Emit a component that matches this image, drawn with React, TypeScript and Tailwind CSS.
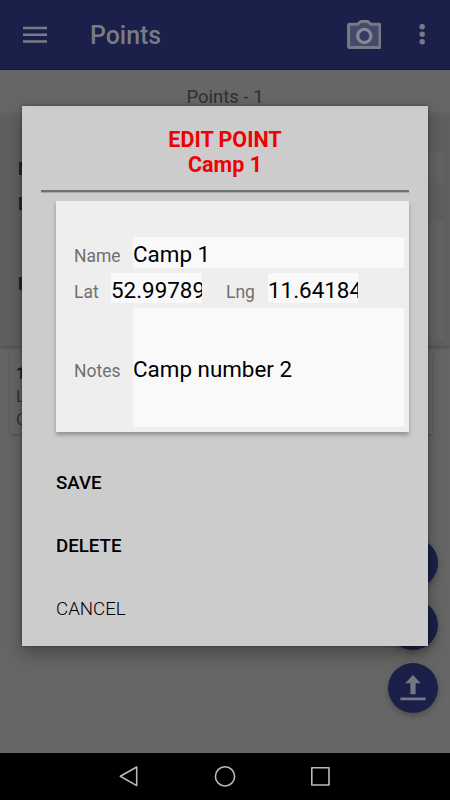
import React from "react";

function Header() {
  return (
    <header className="flex h-[70px] shrink-0 items-center border-b border-[#11183f] bg-[#1a2049] pl-[23px] pr-[25px] text-[#797b84]">
      <svg className="h-[18px] w-6" viewBox="0 0 24 18" fill="currentColor">
        <path d="M0 .7h24v2.6H0zM0 7.4h24V10H0zM0 14.2h24v2.6H0z" />
      </svg>
      <h1 className="ml-[43px] mt-[2px] text-[24.9px] font-medium leading-7">Points</h1>
      <svg className="ml-auto h-[30px] w-[34px]" viewBox="0 0 34 30">
        <path
          d="M2.3 4.6h8l3-2.8h7.4l3 2.8h8q1 0 1 1v21.2q0 1-1 1H2.3q-1 0-1-1V5.6q0-1 1-1z"
          fill="#454a6c"
          stroke="#797b84"
          strokeWidth="3"
          strokeLinejoin="round"
          transform="translate(.3 -.3)"
        />
        <circle cx="17.3" cy="16" r="6.6" fill="#343a62" stroke="#858794" strokeWidth="3.3" />
      </svg>
      <svg className="ml-[38px] h-[21px] w-[6px]" viewBox="0 0 6 21" fill="currentColor">
        <circle cx="3.2" cy="2.8" r="2.7" />
        <circle cx="3.2" cy="10.2" r="2.7" />
        <circle cx="3.2" cy="17.8" r="2.7" />
      </svg>
    </header>
  );
}

function PointsPage() {
  return (
    <main className="flex-1 bg-[#666666] text-[#303030]">
      <p className="h-[43px] pt-[15px] text-center text-[18.5px] leading-6">Points - 1</p>
      <section className="h-[233px] bg-[#606060] pl-[18px] pr-[6px] pt-[39px] text-[17.5px] font-bold leading-[31px] text-[#202020] shadow-[0_2px_3px_rgba(0,0,0,0.2)]">
        <div className="flex h-[31px] justify-between">
          <span className="mt-[2px]">Name</span>
          <span className="w-[270px] bg-[#646464]" />
        </div>
        <div className="mt-[6px] h-[32px]">Lat</div>
        <div className="flex h-[120px] items-center justify-between">
          <span className="mt-[6px]">Notes</span>
          <span className="h-full w-[270px] bg-[#646464]" />
        </div>
      </section>
      <article className="ml-[10px] mr-[18px] mt-[6px] h-[82px] bg-[#676767] pl-[6px] pt-[10px] text-[17px] leading-[23px] shadow-[0_1px_2px_rgba(0,0,0,0.25)]">
        <h2 className="font-bold text-[#202020]">1 - Camp 1</h2>
        <p>Lat 52.99789</p>
        <p>Camp number 2</p>
      </article>
    </main>
  );
}

const fab =
  "flex h-[50px] w-[50px] items-center justify-center rounded-full bg-[#1a2049] shadow-[0_3px_6px_rgba(0,0,0,0.25)]";

function FloatingButtons() {
  return (
    <div className="absolute right-[12.5px] top-[538px] flex flex-col gap-[12.4px]">
      <div className={fab} />
      <div className={fab} />
      <div className={fab}>
        <svg className="h-[26px] w-[26px]" viewBox="0 0 26 26" fill="#757783">
          <path d="M13 0L20.8 8.2h-5.2v11h-5.2v-11H5.2zM.4 22.5h25.2v2.8H.4z" />
        </svg>
      </div>
    </div>
  );
}

function EditDialog() {
  return (
    <div className="absolute left-[22px] top-[106px] h-[540px] w-[406px] bg-[#cccccc] px-[19px] shadow-[0_8px_18px_rgba(0,0,0,0.3),0_0_3px_rgba(0,0,0,0.35)]">
      <h2 className="pt-[21px] text-center text-[21.5px] font-bold leading-[25px] text-[#ee0202]">
        EDIT POINT
        <br />
        Camp 1
      </h2>
      <div className="mt-[13px] h-[2px] bg-[#707070] shadow-[0_1px_0_#a8a8a8]" />
      <section className="ml-[15px] mt-[9px] h-[231px] w-[353px] bg-[#eeeeee] pl-[18px] pt-[36px] text-black shadow-[0_3px_4px_rgba(0,0,0,0.28)]">
        <div className="flex h-[31px]">
          <label className="w-[59px] pt-[7px] text-[17.5px] leading-6 text-[#707070]">Name</label>
          <div className="w-[271px] bg-[#f9f9f9] text-[22.4px] leading-[34px]">Camp 1</div>
        </div>
        <div className="mt-[5px] flex h-[30px]">
          <label className="w-[37px] pt-[7px] text-[17.5px] leading-6 text-[#707070]">Lat</label>
          <div className="w-[91px] overflow-hidden whitespace-nowrap bg-[#f9f9f9] text-[22.4px] leading-[34px]">
            52.99789
          </div>
          <label className="ml-[24px] w-[42px] pt-[7px] text-[17.5px] leading-6 text-[#707070]">Lng</label>
          <div className="w-[90px] overflow-hidden whitespace-nowrap bg-[#f9f9f9] text-[22.4px] leading-[34px]">
            11.64184
          </div>
        </div>
        <div className="mt-[5px] flex h-[119px] items-center">
          <label className="w-[59px] pt-[7px] text-[17.5px] leading-6 text-[#707070]">Notes</label>
          <div className="flex h-full w-[271px] items-center bg-[#f9f9f9] pt-[5px] text-[22.4px]">
            Camp number 2
          </div>
        </div>
      </section>
      <div className="ml-[15px] mt-[20px] flex flex-col items-start text-[18.7px] leading-[63px] text-black">
        <button className="font-medium">SAVE</button>
        <button className="font-medium">DELETE</button>
        <button className="font-light">CANCEL</button>
      </div>
    </div>
  );
}

function NavigationBar() {
  return (
    <nav className="flex h-[47px] shrink-0 items-center justify-center gap-[74px] bg-black pr-[1px]">
      <svg
        className="h-6 w-5"
        viewBox="0 0 20 24"
        fill="none"
        stroke="#bababa"
        strokeWidth="1.6"
        strokeLinejoin="round"
      >
        <path d="M1.3 11.2L17.7 2v18.6z" />
      </svg>
      <svg className="h-6 w-6" viewBox="0 0 24 24" fill="none" stroke="#bababa" strokeWidth="1.6">
        <circle cx="12" cy="11.4" r="9.6" />
      </svg>
      <svg
        className="h-6 w-5"
        viewBox="0 0 20 24"
        fill="none"
        stroke="#bababa"
        strokeWidth="1.6"
        strokeLinejoin="round"
      >
        <path d="M.8 2.8h17.2V20H.8z" />
      </svg>
    </nav>
  );
}

export default function App() {
  return (
    <div className="relative flex h-[800px] w-[450px] flex-col overflow-hidden bg-[#666666] font-['Roboto',sans-serif]">
      <Header />
      <PointsPage />
      <NavigationBar />
      <FloatingButtons />
      <EditDialog />
    </div>
  );
}
